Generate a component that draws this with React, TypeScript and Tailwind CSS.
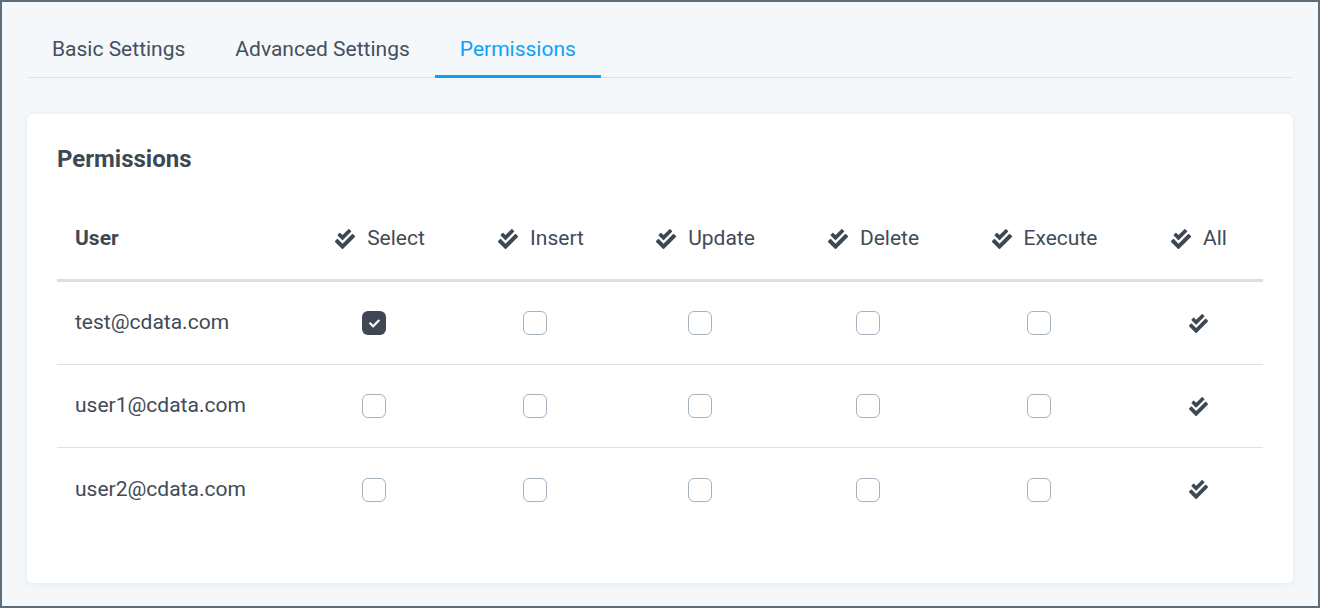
import React from "react";
import { FaCheckDouble, FaCheck } from "react-icons/fa";

const cols = ["Select", "Insert", "Update", "Delete", "Execute", "All"];
const users = [
  { email: "test@cdata.com", checked: [true, false, false, false, false] },
  { email: "user1@cdata.com", checked: [false, false, false, false, false] },
  { email: "user2@cdata.com", checked: [false, false, false, false, false] },
];

const gridCls = "grid grid-cols-[239px_167px_155px_174px_162px_180px_129px] items-center";

function Box({ on }: { on: boolean }) {
  return on ? (
    <div className="w-[24px] h-[24px] rounded-[6px] bg-[#3e4753] flex items-center justify-center">
      <FaCheck className="text-white w-[11px] h-[11px]" />
    </div>
  ) : (
    <div className="w-[24px] h-[24px] rounded-[6px] border border-[#a7b2bf] bg-white" />
  );
}

export default function App() {
  return (
    <div
      className="w-[1320px] h-[608px] border-2 border-[#5e6d7a] bg-[#f4f8fb] px-[25px] pt-[16px] text-[#414b57]"
      style={{ fontFamily: "Roboto, 'Liberation Sans', sans-serif" }}
    >
      <div className="flex border-b border-[#dde2e8]">
        {["Basic Settings", "Advanced Settings", "Permissions"].map((t, i) => (
          <div
            key={t}
            className={
              "px-[25px] pt-[18px] pb-[13px] leading-[26px] text-[21px] -mb-px border-b-[3px] " +
              (i === 2 ? "border-[#0ea2f6] text-[#0ea2f6]" : "border-transparent text-[#454f5b]")
            }
          >
            {t}
          </div>
        ))}
      </div>
      <div className="mt-[36px] bg-white rounded-[6px] shadow-[0_1px_6px_rgba(60,80,110,0.08)] px-[30px] pt-[30px] pb-[52px]">
        <div className="text-[24px] leading-[30px] font-bold text-[#3e4853]">Permissions</div>
        <div className="mt-[24px]">
          <div className={gridCls + " h-[84px] border-b-[3px] border-[#dcdfe6] text-[21px]"}>
            <div className="pl-[18px] font-bold text-[#3e4853]">User</div>
            {cols.map((c) => (
              <div key={c} className="flex items-center justify-center gap-[11px]">
                <FaCheckDouble className="w-[22px] h-[20px] text-[#3e4853]" />
                <span>{c}</span>
              </div>
            ))}
          </div>
          {users.map((u, ri) => (
            <div
              key={u.email}
              className={gridCls + " h-[83px] text-[21px] " + (ri < users.length - 1 ? "border-b border-[#dde1e7]" : "")}
            >
              <div className="pl-[18px]">{u.email}</div>
              {u.checked.map((v, ci) => (
                <div key={ci} className="flex justify-center pr-[11px]">
                  <Box on={v} />
                </div>
              ))}
              <div className="flex justify-center">
                <FaCheckDouble className="w-[21px] h-[19px] text-[#3e4853]" />
              </div>
            </div>
          ))}
        </div>
      </div>
    </div>
  );
}
